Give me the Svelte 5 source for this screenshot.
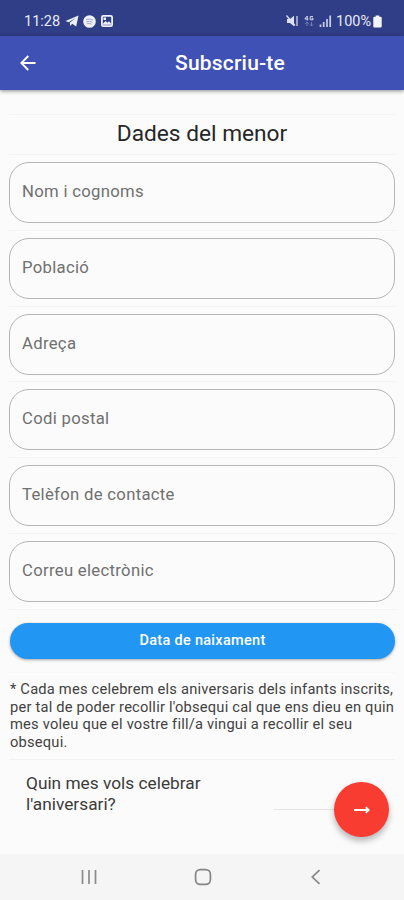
<script lang="ts">
  const fields = [
    { id: 'name', label: 'Nom i cognoms' },
    { id: 'town', label: 'Població' },
    { id: 'address', label: 'Adreça' },
    { id: 'zip', label: 'Codi postal' },
    { id: 'phone', label: 'Telèfon de contacte' },
    { id: 'email', label: 'Correu electrònic' },
  ];

  let values: Record<string, string> = $state({});
</script>

<div class="screen">
  <div class="status-bar">
    <div class="status-left">
      <span class="clock">11:28</span>
      <svg class="telegram" width="14" height="12" viewBox="0 0 14 12">
        <path d="M0.5 6 13.5 0.5 11.2 11.5 7.2 8.8 5.2 11 4.8 7.8 10.5 3 3.6 7.2Z" fill="#eef0fa" />
      </svg>
      <svg class="spotify" width="13" height="13" viewBox="0 0 13 13">
        <circle cx="6.5" cy="6.5" r="6.3" fill="#eef0fa" />
        <path d="M3 4.5Q6.8 3.4 10.2 5M3.3 6.7Q6.6 5.8 9.5 7.2M3.7 8.8Q6.5 8 8.8 9.2" fill="none" stroke="#9ba2cb" stroke-width="0.9" />
      </svg>
      <svg class="gallery" width="12" height="12" viewBox="0 0 12 12">
        <rect x="0.9" y="0.9" width="10.2" height="10.2" rx="1.4" fill="none" stroke="#eef0fa" stroke-width="1.8" />
        <path d="M2 9.8V8.6L4.6 6 6.4 7.8 8 6.2 10 8.6V9.8Z" fill="#eef0fa" />
        <rect x="2.5" y="2.5" width="2.5" height="2.5" fill="#eef0fa" />
      </svg>
    </div>
    <div class="status-right">
      <svg width="12" height="12" viewBox="0 0 12 12">
        <path d="M1 4H4L8 0.8V11.2L4 8H1Z" fill="#dfe2f2" />
        <path d="M0.5 0.5 9 10.5M11 1V11" stroke="#dfe2f2" stroke-width="1.2" />
      </svg>
      <svg class="network" width="10" height="12" viewBox="0 0 10 12">
        <path d="M3.2 5.5V1L0.8 4H4.4M9 1.6H6.2V4.8H9V3.3H7.6" fill="none" stroke="#d5d9ee" stroke-width="1" />
        <path d="M3 11V7M1.4 8.6 3 7 4.6 8.6M7.5 7V11M5.9 9.4 7.5 11 9.1 9.4" fill="none" stroke="#7f87bb" stroke-width="0.9" />
      </svg>
      <svg class="signal" width="13" height="12" viewBox="0 0 13 12">
        <path d="M1.5 9.5V12M4.7 7V12M8 4V12M11.2 0.5V12" stroke="#c8cde8" stroke-width="1.7" />
      </svg>
      <span class="battery-level">100%</span>
      <svg width="9" height="13" viewBox="0 0 9 13">
        <path d="M2.7 0.5H6.3V1.8H7.5Q8.7 1.8 8.7 3V11.5Q8.7 12.6 7.5 12.6H1.5Q0.3 12.6 0.3 11.5V3Q0.3 1.8 1.5 1.8H2.7Z" fill="#f3f5fc" />
      </svg>
    </div>
  </div>

  <header class="app-bar">
    <button class="back" aria-label="Enrere">
      <svg width="16" height="16" viewBox="0 0 16 16">
        <path d="M15.5 8H1.5M8.3 1 1.3 8 8.3 15" fill="none" stroke="#fff" stroke-width="1.8" />
      </svg>
    </button>
    <h1>Subscriu-te</h1>
  </header>

  <main>
    <h2>Dades del menor</h2>

    {#each fields as field}
      <div class="field-row">
        <input type="text" placeholder={field.label} aria-label={field.label} bind:value={values[field.id]} />
      </div>
    {/each}

    <div class="button-row">
      <button class="date-button">Data de naixament</button>
    </div>

    <p class="note">
      * Cada mes celebrem els aniversaris dels infants inscrits,<br />
      per tal de poder recollir l'obsequi cal que ens dieu en quin<br />
      mes voleu que el vostre fill/a vingui a recollir el seu<br />
      obsequi.
    </p>

    <div class="month-row">
      <p>Quin mes vols celebrar<br />l'aniversari?</p>
      <div class="month-select"></div>
      <button class="next" aria-label="Següent">
        <svg width="16" height="11" viewBox="0 0 16 11">
          <path d="M0 6H14.5M11.8 3.2 14.6 6 11.8 8.8" fill="none" stroke="#fff" stroke-width="1.9" />
        </svg>
      </button>
    </div>
  </main>

  <nav class="nav-bar">
    <svg width="16" height="16" viewBox="0 0 16 16">
      <path d="M1.5 1V15M8 1V15M14.5 1V15" stroke="#8b8b8b" stroke-width="1.7" />
    </svg>
    <svg width="18" height="18" viewBox="0 0 18 18">
      <rect x="1.6" y="1.6" width="14.8" height="14.8" rx="4.6" fill="none" stroke="#858585" stroke-width="1.7" />
    </svg>
    <svg width="16" height="16" viewBox="0 0 16 16">
      <path d="M11.5 1.2 4.3 8 11.5 14.8" fill="none" stroke="#858585" stroke-width="1.7" />
    </svg>
  </nav>
</div>

<style>
  :global(body) {
    margin: 0;
    background: #fbfbfb;
  }

  .screen {
    display: flex;
    flex-direction: column;
    width: 404px;
    height: 900px;
    overflow: hidden;
    background: #fbfbfb;
    font-family: Roboto, 'Liberation Sans', sans-serif;
  }

  svg {
    display: block;
    flex-shrink: 0;
  }

  button {
    border: none;
    padding: 0;
    font-family: inherit;
  }

  .status-bar {
    display: flex;
    justify-content: space-between;
    box-sizing: border-box;
    height: 36px;
    padding: 6px 22px 0 24px;
    background: #303e88;
    color: #e6e9f7;
    font-size: 14.5px;
  }

  .status-left,
  .status-right {
    display: flex;
    align-items: center;
  }

  .clock {
    width: 41px;
  }

  .spotify {
    margin-left: 4px;
  }

  .gallery {
    margin-left: 5px;
  }

  .network {
    margin-left: 6px;
  }

  .signal {
    margin: 0 4px 0 5px;
  }

  .battery-level {
    width: 37px;
    white-space: nowrap;
  }

  .app-bar {
    display: flex;
    align-items: center;
    position: relative;
    flex-shrink: 0;
    box-sizing: border-box;
    height: 54px;
    padding-left: 20px;
    background: #3f51b5;
    box-shadow: 0 1px 4px rgba(0, 0, 0, 0.45);
  }

  .back {
    background: none;
  }

  h1 {
    flex: 1;
    margin: 0 0 0 20px;
    color: #fff;
    font-size: 21px;
    font-weight: 500;
    letter-spacing: 0.2px;
    text-align: center;
  }

  main {
    flex: 1;
    display: flex;
    flex-direction: column;
    padding: 24px 9px 0;
  }

  h2 {
    box-sizing: border-box;
    height: 40px;
    margin: 0;
    border-top: 1px solid #f4f4f4;
    color: #272727;
    font-size: 22.7px;
    font-weight: 400;
    line-height: 37px;
    text-align: center;
  }

  .field-row {
    box-sizing: border-box;
    height: 75.8px;
    padding-top: 7px;
    border-top: 1px solid #f3f3f3;
  }

  input {
    display: block;
    box-sizing: border-box;
    width: 386px;
    height: 61px;
    padding: 0 12px 2px;
    border: 1px solid #b5b5b5;
    border-radius: 20px;
    background: transparent;
    color: #272727;
    font-family: inherit;
    font-size: 16.7px;
    letter-spacing: 0.3px;
  }

  input::placeholder {
    color: #707070;
    opacity: 1;
  }

  .button-row {
    box-sizing: border-box;
    height: 63px;
    padding: 13px 0 0 1px;
    border-top: 1px solid #f3f3f3;
  }

  .date-button {
    width: 385px;
    height: 36px;
    border-radius: 18px;
    background: #2196f3;
    box-shadow: 0 1px 3px rgba(0, 0, 0, 0.35);
    color: #fff;
    font-size: 14.5px;
    font-weight: 500;
    letter-spacing: 0.3px;
  }

  .note {
    box-sizing: border-box;
    height: 87px;
    margin: 0;
    padding: 8px 0 0 1px;
    border-top: 1px solid #f7f7f7;
    color: #424242;
    font-size: 14.7px;
    letter-spacing: 0.2px;
    line-height: 17.8px;
    white-space: nowrap;
  }

  .month-row {
    display: flex;
    flex: 1;
    border-top: 1px solid #f1f1f1;
    padding: 13px 6px 0 17px;
  }

  .month-row p {
    width: 248px;
    margin: 0;
    color: #3b3b3b;
    font-size: 17.3px;
    line-height: 21px;
  }

  .month-select {
    width: 60px;
    height: 36px;
    border-bottom: 1px solid #e4e4e4;
  }

  .next {
    display: flex;
    align-items: center;
    justify-content: center;
    width: 55px;
    height: 55px;
    margin-top: 9px;
    border-radius: 50%;
    background: #f93c31;
    box-shadow: 0 4px 6px rgba(0, 0, 0, 0.28);
  }

  .nav-bar {
    display: flex;
    align-items: center;
    justify-content: space-between;
    flex-shrink: 0;
    box-sizing: border-box;
    height: 46px;
    padding: 0 80px 0 81px;
    background: #f5f5f5;
  }
</style>
